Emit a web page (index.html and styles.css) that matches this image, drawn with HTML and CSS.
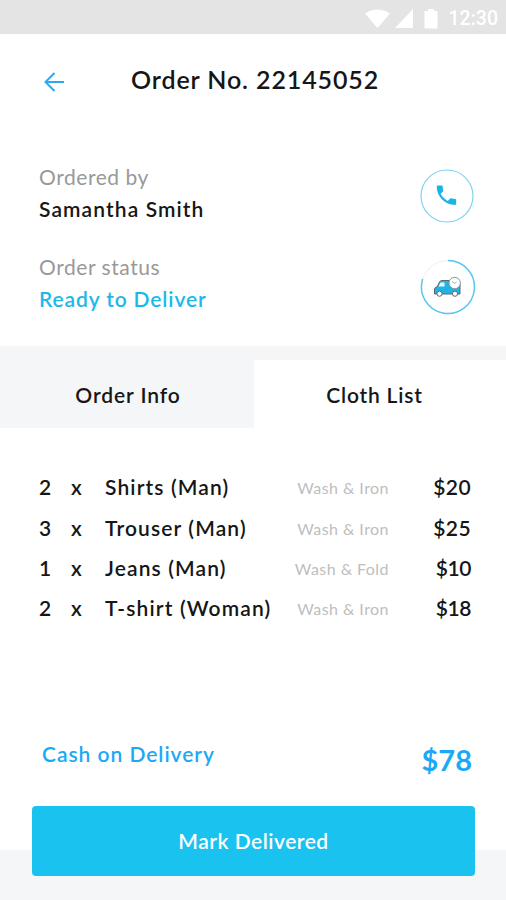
FILE: index.html
```html
<!DOCTYPE html>
<html lang="en">
<head>
<meta charset="utf-8">
<title>Order No. 22145052</title>
<link rel="stylesheet" href="styles.css">
</head>
<body>
<div class="statusbar">
  <svg class="status-icons" viewBox="0 0 76 20" width="76" height="20" fill="#fff">
    <path d="M0 4.500Q12.500-3.500 25 4.500L12.500 19Z"/>
    <path d="M48 0V19H30Z"/>
    <path d="M63 0h6v2h3.500v17.500h-13V2H63Z"/>
  </svg>
  <span class="clock">12:30</span>
</div>
<header class="header">
  <svg class="back" viewBox="0 0 20 20" width="20" height="20" fill="none" stroke="#2ba9f2" stroke-width="2"><path d="M20 10H2M10.500 1L1.500 10L10.500 19"/></svg>
  <h1 class="title">Order No. 22145052</h1>
</header>
<section class="details">
  <div class="detail">
    <div>
      <div class="label">Ordered by</div>
      <div class="value">Samantha Smith</div>
    </div>
    <svg class="ring" viewBox="0 0 56 56" width="56" height="56">
      <circle cx="28" cy="28" r="26" fill="#fff" stroke="#7fd3f3" stroke-width="1.200"/>
      <path transform="translate(14.500 14.200) scale(1.080)" fill="#19b5ea" d="M6.620 10.790c1.440 2.830 3.760 5.140 6.590 6.590l2.200-2.200c.27-.27.67-.36 1.020-.24 1.120.37 2.330.57 3.570.57.550 0 1 .450 1 1V20c0 .550-.450 1-1 1-9.390 0-17-7.610-17-17 0-.550.450-1 1-1h3.500c.550 0 1 .450 1 1 0 1.250.2 2.450.570 3.570.110.350.030.740-.250 1.020l-2.200 2.200z"/>
    </svg>
  </div>
  <div class="detail">
    <div>
      <div class="label">Order status</div>
      <div class="value accent">Ready to Deliver</div>
    </div>
    <svg class="ring ring-status" viewBox="0 0 56 56" width="56" height="56">
      <circle cx="28" cy="28" r="26.500" fill="#fff" stroke="#eceff1" stroke-width="1"/>
      <path d="M28 1.500A26.500 26.500 0 1 1 2.700 20" fill="none" stroke="#55c8ef" stroke-width="1.500"/>
      <g stroke="#5b686e" stroke-width="1">
        <path d="M14.500 35V30Q14.500 28.500 17 28L19.500 23Q20 21.500 22 21.500H32V24H40V35Z" fill="#20b4e4"/>
        <path d="M18.500 27.500L20.500 23.500H24.500V27.500Z" fill="#e9f8fc" stroke="none"/>
        <circle cx="19.500" cy="34.700" r="2.600" fill="#fff"/>
        <circle cx="35" cy="34.700" r="2.600" fill="#fff"/>
        <circle cx="34.700" cy="24" r="5.700" fill="#fff" stroke="#8d979b"/>
        <path d="M32 22.500l2.500 1.800l2-1" fill="none" stroke="#50bde1" stroke-width=".900"/>
      </g>
    </svg>
  </div>
</section>
<nav class="tabs">
  <div class="tab">Order Info</div>
  <div class="tab active">Cloth List</div>
</nav>
<main class="list">
  <div class="row"><span>2</span><span>x</span><span class="item">Shirts (Man)</span><span class="service">Wash &amp; Iron</span><span class="price">$20</span></div>
  <div class="row"><span>3</span><span>x</span><span class="item">Trouser (Man)</span><span class="service">Wash &amp; Iron</span><span class="price">$25</span></div>
  <div class="row"><span>1</span><span>x</span><span class="item">Jeans (Man)</span><span class="service">Wash &amp; Fold</span><span class="price narrow">$10</span></div>
  <div class="row"><span>2</span><span>x</span><span class="item">T-shirt (Woman)</span><span class="service">Wash &amp; Iron</span><span class="price narrow">$18</span></div>
</main>
<div class="summary">
  <span class="method">Cash on Delivery</span>
  <span class="total">$78</span>
</div>
<footer class="footer"><button class="button">Mark Delivered</button></footer>
</body>
</html>
```
FILE: styles.css
```css
* { box-sizing: border-box; }
body {
  margin: 0;
  width: 506px;
  height: 900px;
  overflow: hidden;
  display: flex;
  flex-direction: column;
  background: #fff;
  color: #161616;
  font: 600 21px/32px Lato, "Open Sans", sans-serif;
}
.statusbar {
  height: 34px;
  flex: none;
  background: #e4e4e4;
  display: flex;
  justify-content: flex-end;
  padding: 9px 8px 0 0;
  gap: 8px;
}
.clock { font: 500 19.500px/20px Roboto, sans-serif; color: #fff; }
.header {
  height: 127px;
  flex: none;
  display: flex;
  align-items: flex-start;
  padding: 29px 0 0 44px;
}
.back { margin-top: 9px; }
.title {
  margin: 0 0 0 67px;
  font-size: 25px;
  font-weight: 600;
  line-height: 32px;
  letter-spacing: .88px;
  white-space: nowrap;
}
.details { height: 185px; flex: none; padding-left: 39px; }
.detail {
  height: 90px;
  display: flex;
  justify-content: space-between;
  padding-right: 31px;
}
.label { color: #999; font-weight: 400; letter-spacing: .55px; }
.value { letter-spacing: 1.1px; }
.accent { color: #1cb8ea; letter-spacing: .88px; }
.ring { margin-top: 7px; flex: none; }
.ring-status { margin: 8px -1px 0 0; }
.tabs {
  height: 82px;
  flex: none;
  display: grid;
  grid-template-columns: 254px 252px;
  padding-top: 14px;
  background: #f4f6f8;
}
.tab {
  display: flex;
  justify-content: center;
  padding: 19px 0 0 2px;
  letter-spacing: .9px;
}
.active { background: #fff; padding-right: 13px; letter-spacing: .8px; }
.list { height: 300px; flex: none; padding: 39.400px 35px 0 39px; }
.row {
  height: 40.300px;
  line-height: 40px;
  display: grid;
  grid-template-columns: 32px 34px 180px 104px 1fr;
  white-space: nowrap;
}
.item { letter-spacing: 1.13px; }
.service {
  color: #bebebe;
  font-size: 16px;
  font-weight: 400;
  line-height: 42px;
  letter-spacing: .45px;
  text-align: right;
}
.price { text-align: right; letter-spacing: .4px; }
.narrow { letter-spacing: -.4px; }
.summary {
  height: 78px;
  flex: none;
  display: flex;
  justify-content: space-between;
  padding: 10px 34px 0 42px;
  color: #1ba9f5;
}
.method { letter-spacing: .97px; }
.total { font-size: 29px; line-height: 43px; font-weight: 700; }
.footer {
  height: 94px;
  flex: none;
  padding: 0 31px 0 32px;
  background: linear-gradient(#fff 44px, #f4f6f8 44px);
}
.button {
  display: block;
  width: 100%;
  height: 70px;
  border: 0;
  border-radius: 4px;
  background: #1ac2f0;
  color: #fff;
  font: inherit;
  letter-spacing: .5px;
}
```
